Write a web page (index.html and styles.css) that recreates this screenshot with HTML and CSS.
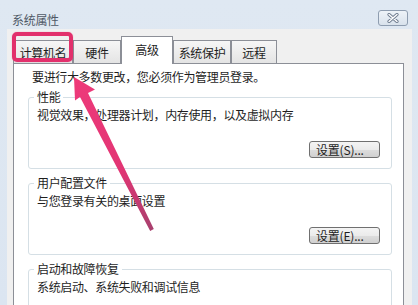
FILE: index.html
```html
<!DOCTYPE html>
<html lang="zh-CN">
<head>
<meta charset="utf-8">
<title>系统属性</title>
<link rel="stylesheet" href="styles.css">
</head>
<body>
<div class="window">
  <div class="titlebar">
    <span class="title">系统属性</span>
    <div class="close">
      <svg width="14" height="10" viewBox="0 0 14 10">
        <path d="M3 1.5 L11 8.5 M11 1.5 L3 8.5" stroke="#6d7b8e" stroke-width="3.2" stroke-linecap="round"/>
        <path d="M3 1.5 L11 8.5 M11 1.5 L3 8.5" stroke="#ffffff" stroke-width="1.4" stroke-linecap="round"/>
      </svg>
    </div>
  </div>
  <div class="client">
    <div class="tabs">
      <div class="tab w1">计算机名</div>
      <div class="tab w2">硬件</div>
      <div class="tab w3 active">高级</div>
      <div class="tab w4">系统保护</div>
      <div class="tab w5">远程</div>
    </div>
    <div class="panel">
      <p class="intro">要进行大多数更改，您必须作为管理员登录。</p>
      <fieldset class="group">
        <legend>性能</legend>
        <p class="desc">视觉效果，处理器计划，内存使用，以及虚拟内存</p>
        <div class="actions"><button class="btn">设置(S)...</button></div>
      </fieldset>
      <fieldset class="group">
        <legend>用户配置文件</legend>
        <p class="desc">与您登录有关的桌面设置</p>
        <div class="actions"><button class="btn">设置(E)...</button></div>
      </fieldset>
      <fieldset class="group">
        <legend>启动和故障恢复</legend>
        <p class="desc">系统启动、系统失败和调试信息</p>
      </fieldset>
    </div>
  </div>
  <div class="highlight"></div>
  <svg class="arrow" width="418" height="305" viewBox="0 0 418 305">
    <defs>
      <linearGradient id="ag" x1="74" y1="78" x2="152" y2="230" gradientUnits="userSpaceOnUse">
        <stop offset="0" stop-color="#ee3a7a"/>
        <stop offset="0.6" stop-color="#e23574"/>
        <stop offset="1" stop-color="#a8406e"/>
      </linearGradient>
    </defs>
    <polygon points="74,77 95,89.5 88,93 153.8,229 150.2,231 80,97 75,100.5" fill="url(#ag)"/>
  </svg>
</div>
</body>
</html>
```

FILE: styles.css
```css
* { box-sizing: border-box; }
html, body { margin: 0; padding: 0; }
body {
  background: #dce7f3;
  font-family: "Noto Sans CJK SC", "Noto Sans", sans-serif;
  font-size: 12px;
  color: #1e1e1e;
}
.window {
  position: relative;
  width: 418px;
  height: 305px;
  overflow: hidden;
  background: linear-gradient(to bottom, #dfe8f2 0%, #dbe5f1 100%);
  display: flex;
  flex-direction: column;
}
.titlebar {
  height: 29px;
  flex: none;
  display: flex;
  justify-content: space-between;
  align-items: flex-start;
  padding: 0 10px 0 12px;
}
.title {
  margin-top: 13px;
  line-height: 14px;
  color: #4f5966;
  letter-spacing: -0.3px;
}
.close {
  margin-top: 10px;
  width: 30px;
  height: 16px;
  border: 1px solid #8e9db0;
  border-radius: 3px;
  background: linear-gradient(to bottom, #eef3f8, #d9e2ec);
  display: flex;
  align-items: center;
  justify-content: center;
}
.client {
  flex: 1;
  margin: 0 6px 0 7px;
  background: #f0f0f0;
  padding: 7px 8px 0 6px;
  display: flex;
  flex-direction: column;
}
.tabs {
  display: flex;
  align-items: flex-end;
  height: 27px;
  flex: none;
  position: relative;
  z-index: 2;
}
.tab {
  height: 23px;
  border: 1px solid #8c8f97;
  border-bottom: none;
  background: linear-gradient(to bottom, #f6f6f6, #e4e4e4);
  display: flex;
  align-items: center;
  justify-content: center;
  letter-spacing: -0.35px;
  padding-top: 1px;
}
.tab.active {
  height: 28px;
  margin-bottom: -1px;
  background: #ffffff;
  padding-bottom: 4px;
}
.w1 { width: 60px; }
.w2 { width: 48px; }
.w3 { width: 52px; }
.w4 { width: 58px; }
.w5 { width: 46px; }
.panel {
  flex: 1;
  background: #ffffff;
  border: 1px solid #8c8f97;
  border-bottom: none;
  padding: 6px 11px 0 14px;
}
.intro {
  margin: 0 0 0 4px;
  line-height: 14px;
  letter-spacing: -0.35px;
}
.group {
  margin: 7px 0 0 0;
  padding: 4px 11px 10px 8px;
  border: 1px solid #d5dfe5;
  border-radius: 3px;
  min-inline-size: 0;
  min-height: 72px;
}
.intro + .group { margin-top: 6px; }
.group legend {
  padding: 0 3px;
  margin-left: -3px;
  line-height: 14px;
  letter-spacing: -0.35px;
}
.desc {
  margin: 0;
  line-height: 14px;
  letter-spacing: -0.35px;
}
.actions {
  display: flex;
  justify-content: flex-end;
  margin-top: 19px;
}
.btn {
  width: 71px;
  height: 17px;
  border: 1px solid #707070;
  border-radius: 3px;
  background: linear-gradient(to bottom, #f4f4f4 0%, #ebebeb 50%, #dddddd 51%, #d0d0d0 100%);
  font-family: inherit;
  font-size: 12px;
  line-height: 13px;
  color: #1e1e1e;
  padding: 0 0 0 6px;
  text-align: left;
  letter-spacing: -0.2px;
}
.highlight {
  position: absolute;
  left: 12px;
  top: 32px;
  width: 61px;
  height: 30px;
  border: 4px solid #e2306c;
  border-radius: 5px;
  box-shadow: 0 0 1px rgba(226, 48, 108, 0.6);
  z-index: 5;
}
.arrow {
  position: absolute;
  left: 0;
  top: 0;
  z-index: 6;
  pointer-events: none;
}
```
